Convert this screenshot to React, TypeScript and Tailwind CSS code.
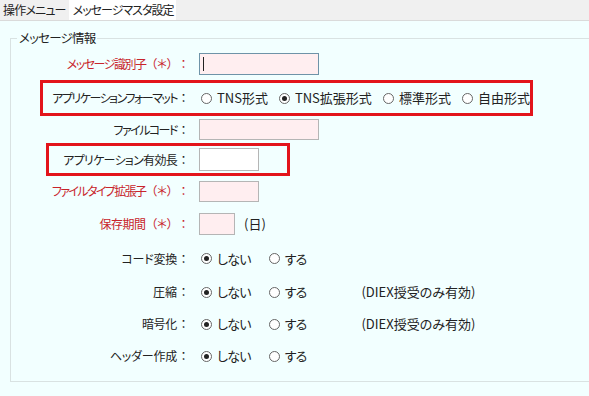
import React from 'react'

const font = { fontFamily: '"Noto Sans CJK JP", "Noto Sans", sans-serif' }

function Radio({ checked, label, className = '' }: { checked?: boolean; label: string; className?: string }) {
  return (
    <span className={`flex items-center ${className}`}>
      <span className="flex h-[11px] w-[11px] items-center justify-center rounded-full border border-[#666] bg-white">
        {checked && <span className="h-[5px] w-[5px] rounded-full bg-[#222]" />}
      </span>
      <span className="ml-[5px]">{label}</span>
    </span>
  )
}

function Label({
  text,
  red,
  width = 'w-[179px]',
  track = 'tracking-[-1px]',
}: {
  text: string
  red?: boolean
  width?: string
  track?: string
}) {
  return (
    <div
      className={`${width} flex shrink-0 justify-end whitespace-nowrap text-[12px] ${red ? 'text-[#c8242b]' : 'text-[#222]'}`}
    >
      <span className={track}>{text}</span>
      {red && <span className="tracking-[-1.5px] [font-feature-settings:normal]">（＊）</span>}
      <span className="w-[13px] text-center [font-feature-settings:normal]">：</span>
    </div>
  )
}

function YesNo({ note }: { note?: boolean }) {
  return (
    <div className="flex items-center">
      <Radio checked label="しない" className="ml-[2px] tracking-[-0.8px]" />
      <Radio label="する" className="ml-[18px] tracking-[-0.8px]" />
      {note && <span className="ml-[55px]">(DIEX授受のみ有効)</span>}
    </div>
  )
}

export default function App() {
  return (
    <div
      className="h-[396px] w-[589px] overflow-hidden bg-[#f2ffff] text-[13px] leading-[18px] text-[#222] [font-feature-settings:'palt']"
      style={font}
    >
      {/* Tabs */}
      <div className="flex h-[21px] items-end whitespace-nowrap border-b border-[#dadada] bg-[#f0f0f0] text-[12px] tracking-[-0.8px]">
        <div className="flex h-[20px] items-center pl-[3px] pr-[3px] text-[#222]">操作メニュー</div>
        <div className="flex h-[21px] items-center bg-white pl-[4px] pr-[3px] tracking-[-1px]">メッセージマスタ設定</div>
      </div>

      <fieldset className="ml-[10px] mt-[8px] w-[620px] border border-[#d9e2e2] pb-[9px]">
        <legend className="ml-[6px] px-[2px] text-[12.5px] leading-[18px] tracking-[-0.8px]">メッセージ情報</legend>

        <div className="flex h-[33px] items-center">
          <Label text="メッセージ識別子" red track="tracking-[-1.5px]" />
          <div className="ml-[9px] flex h-[22px] w-[120px] items-center border border-[#6f93a8] bg-[#ffeef0] pl-[3px]">
            <span className="h-[14px] w-px bg-[#222]" />
          </div>
        </div>

        <div className="ml-[29px] flex h-[36px] w-[493px] items-center border-[3px] border-[#e3141b]">
          <Label text="アプリケーションフォーマット" width="w-[147px]" track="tracking-[-1.5px]" />
          <div className="ml-[9px] flex items-center">
            <Radio label="TNS形式" className="ml-[2px]" />
            <Radio checked label="TNS拡張形式" className="ml-[11px]" />
            <Radio label="標準形式" className="ml-[11px]" />
            <Radio label="自由形式" className="ml-[11px]" />
          </div>
        </div>

        <div className="flex h-[27px] items-center">
          <Label text="ファイルコード" track="tracking-[-1.5px]" />
          <div className="ml-[9px] h-[21px] w-[120px] border border-[#b5b5b5] bg-[#ffeef0]" />
        </div>

        <div className="ml-[35px] flex h-[33px] w-[244px] items-center border-[3px] border-[#e3141b]">
          <Label text="アプリケーション有効長" width="w-[141px]" track="tracking-[-0.7px]" />
          <div className="ml-[9px] h-[23px] w-[60px] border border-[#b5b5b5] bg-white" />
        </div>

        <div className="flex h-[30px] items-center">
          <Label text="ファイルタイプ拡張子" red track="tracking-[-1.6px]" />
          <div className="ml-[9px] h-[21px] w-[60px] border border-[#b5b5b5] bg-[#ffeef0]" />
        </div>

        <div className="flex h-[35px] items-center">
          <Label text="保存期間" red track="tracking-[-0.5px]" />
          <div className="ml-[9px] h-[22px] w-[36px] border border-[#b5b5b5] bg-[#ffeef0]" />
          <span className="ml-[9px]">(日)</span>
        </div>

        <div className="flex h-[35px] items-center">
          <Label text="コード変換" track="tracking-[-0.2px]" />
          <div className="ml-[9px]"><YesNo /></div>
        </div>

        <div className="flex h-[32px] items-center">
          <Label text="圧縮" track="tracking-[0px]" />
          <div className="ml-[9px]"><YesNo note /></div>
        </div>

        <div className="flex h-[32px] items-center">
          <Label text="暗号化" track="tracking-[-0.3px]" />
          <div className="ml-[9px]"><YesNo note /></div>
        </div>

        <div className="flex h-[32px] items-center">
          <Label text="ヘッダー作成" track="tracking-[-0.2px]" />
          <div className="ml-[9px]"><YesNo /></div>
        </div>
      </fieldset>
    </div>
  )
}
